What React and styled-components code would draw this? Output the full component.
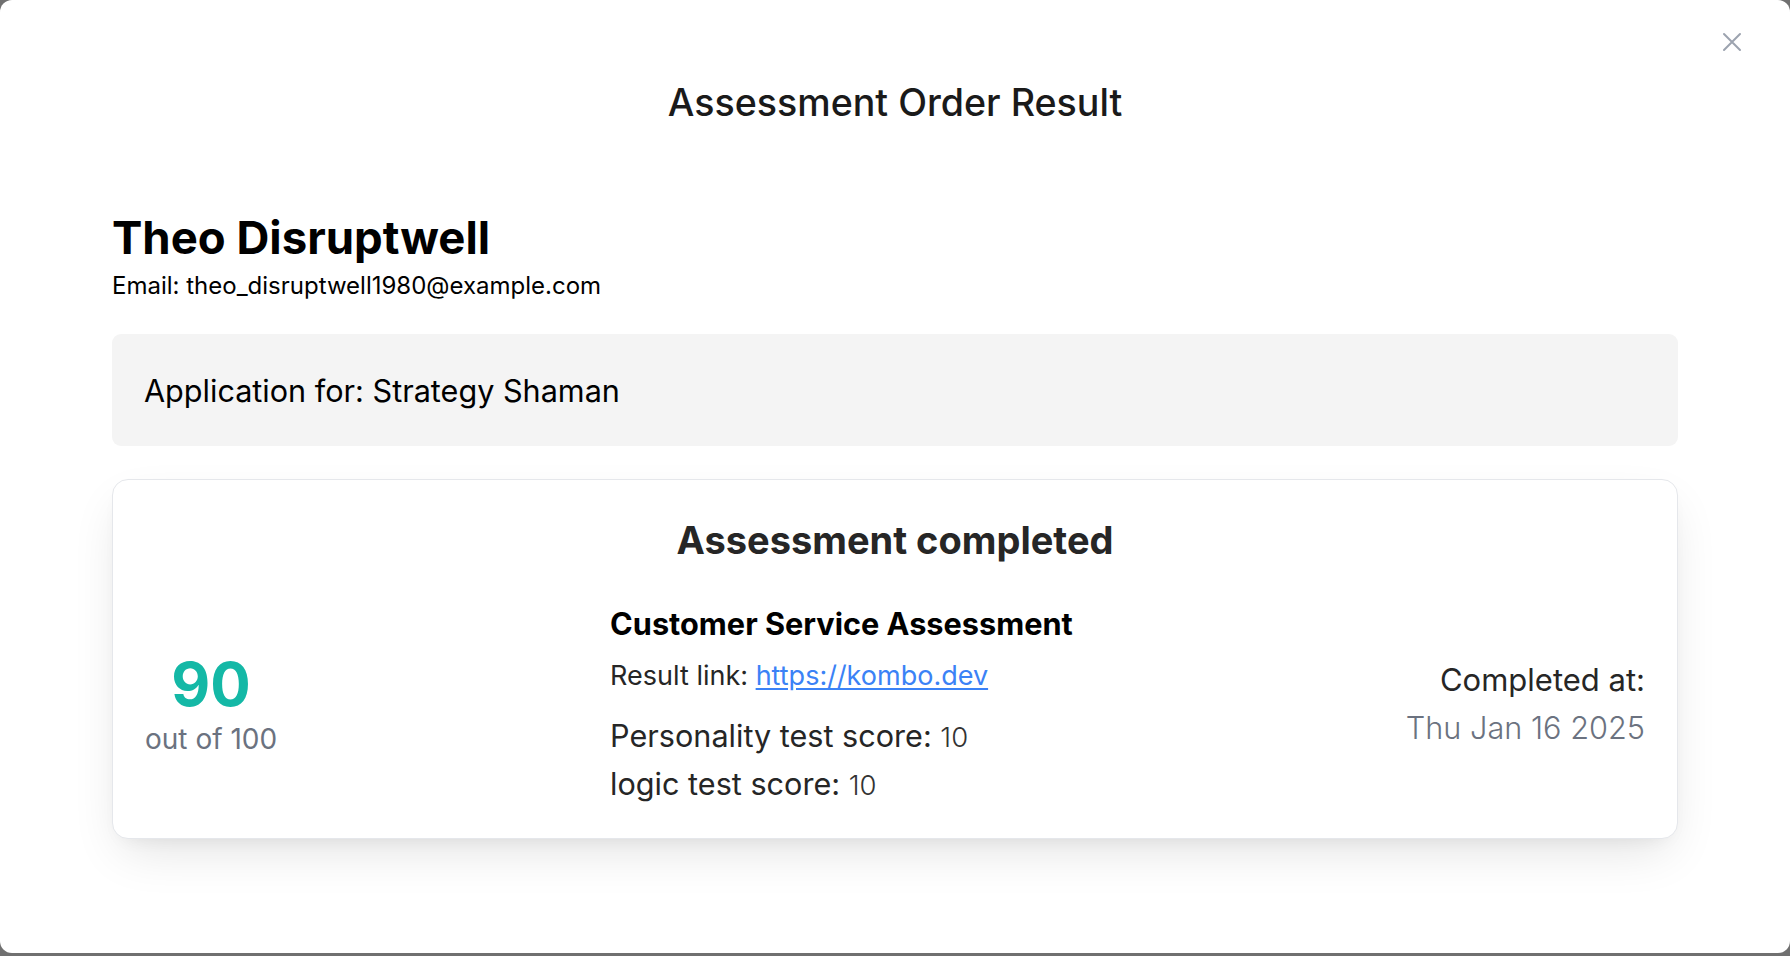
import React from "react";
import styled, { createGlobalStyle } from "styled-components";

const Global = createGlobalStyle`
  html, body {
    margin: 0;
    padding: 0;
    background: #707070;
    font-family: Inter, "Noto Sans", "Liberation Sans", sans-serif;
    -webkit-font-smoothing: antialiased;
  }
  * { box-sizing: border-box; }
`;

const Modal = styled.div`
  position: relative;
  width: 1790px;
  height: 953px;
  background: #ffffff;
  border-radius: 12px;
  padding: 79px 112px 0;
  display: flex;
  flex-direction: column;
`;

const CloseButton = styled.button`
  position: absolute;
  top: 32px;
  right: 48px;
  width: 20px;
  height: 20px;
  padding: 0;
  border: none;
  background: transparent;
  color: #9ca3af;
  display: flex;
  align-items: center;
  justify-content: center;
  cursor: pointer;
`;

const Title = styled.h1`
  margin: 0;
  text-align: center;
  font-size: 37.6px;
  line-height: 48px;
  font-weight: 500;
  color: #1a1a1a;
`;

const Candidate = styled.section`
  margin-top: 85px;
  display: flex;
  flex-direction: column;
`;

const Name = styled.h2`
  margin: 0;
  font-size: 45.5px;
  line-height: 52px;
  font-weight: 700;
  color: #000;
`;

const Email = styled.p`
  margin: 6px 0 0;
  font-size: 24px;
  line-height: 32px;
  color: #000;
`;

const ApplicationBox = styled.div`
  margin-top: 32px;
  height: 112px;
  background: #f4f4f4;
  border-radius: 9px;
  padding: 0 32px;
  display: flex;
  align-items: center;
  font-size: 30.6px;
  color: #000;
`;

const Card = styled.div`
  margin-top: 33px;
  border: 1.5px solid #e5e7eb;
  border-radius: 16px;
  background: #fff;
  box-shadow: 0 20px 50px -10px rgba(0, 0, 0, 0.12), 0 8px 20px -12px rgba(0, 0, 0, 0.1);
  padding: 36px 32px 30px;
  display: flex;
  flex-direction: column;
`;

const CardTitle = styled.h3`
  margin: 0;
  text-align: center;
  font-size: 38px;
  line-height: 48px;
  font-weight: 700;
  color: #262626;
`;

const Row = styled.div`
  margin-top: 40px;
  display: flex;
  justify-content: space-between;
  align-items: center;
`;

const ScoreColumn = styled.div`
  display: flex;
  flex-direction: column;
  align-items: center;
  gap: 5px;
  margin-bottom: 3px;
`;

const Score = styled.div`
  font-size: 60px;
  line-height: 64px;
  font-weight: 700;
  color: #14b8a6;
`;

const OutOf = styled.div`
  font-size: 28px;
  line-height: 36px;
  color: #6b7280;
`;

const Details = styled.div`
  display: flex;
  flex-direction: column;
`;

const AssessmentName = styled.div`
  font-size: 30.7px;
  line-height: 40px;
  font-weight: 700;
  color: #000;
`;

const ResultLine = styled.div`
  margin-top: 14px;
  font-size: 27px;
  line-height: 36px;
  color: #262626;

  a {
    color: #3b82f6;
    text-decoration: underline;
    text-underline-offset: 3px;
  }
`;

const ScoreList = styled.div`
  margin-top: 18px;
  display: flex;
  flex-direction: column;
`;

const ScoreLine = styled.div`
  font-size: 30.6px;
  line-height: 48px;
  color: #262626;
`;

const ScoreValue = styled.span`
  font-size: 27.5px;
  line-height: 1;
  font-weight: 300;
  color: #333;
`;

const CompletedColumn = styled.div`
  display: flex;
  flex-direction: column;
  align-items: flex-end;
  margin-bottom: 4px;
`;

const CompletedLabel = styled.div`
  font-size: 31px;
  line-height: 48px;
  color: #262626;
`;

const CompletedDate = styled.div`
  font-size: 30.7px;
  line-height: 48px;
  font-weight: 300;
  color: #6b7280;
`;

const XIcon = () => (
  <svg width="20" height="20" viewBox="0 0 20 20" fill="none" stroke="currentColor" strokeWidth="2" strokeLinecap="round">
    <path d="M2 2 L18 18 M18 2 L2 18" />
  </svg>
);

export default function App() {
  const scores = [
    { label: "Personality test score:", value: 10 },
    { label: "logic test score:", value: 10 },
  ];
  return (
    <>
      <Global />
      <Modal>
        <CloseButton aria-label="Close">
          <XIcon />
        </CloseButton>
        <Title>Assessment Order Result</Title>
        <Candidate>
          <Name>Theo Disruptwell</Name>
          <Email>Email: theo_disruptwell1980@example.com</Email>
        </Candidate>
        <ApplicationBox>Application for: Strategy Shaman</ApplicationBox>
        <Card>
          <CardTitle>Assessment completed</CardTitle>
          <Row>
            <ScoreColumn>
              <Score>90</Score>
              <OutOf>out of 100</OutOf>
            </ScoreColumn>
            <Details>
              <AssessmentName>Customer Service Assessment</AssessmentName>
              <ResultLine>
                Result link: <a href="#">https://kombo.dev</a>
              </ResultLine>
              <ScoreList>
                {scores.map((s) => (
                  <ScoreLine key={s.label}>
                    {s.label} <ScoreValue>{s.value}</ScoreValue>
                  </ScoreLine>
                ))}
              </ScoreList>
            </Details>
            <CompletedColumn>
              <CompletedLabel>Completed at:</CompletedLabel>
              <CompletedDate>Thu Jan 16 2025</CompletedDate>
            </CompletedColumn>
          </Row>
        </Card>
      </Modal>
    </>
  );
}
